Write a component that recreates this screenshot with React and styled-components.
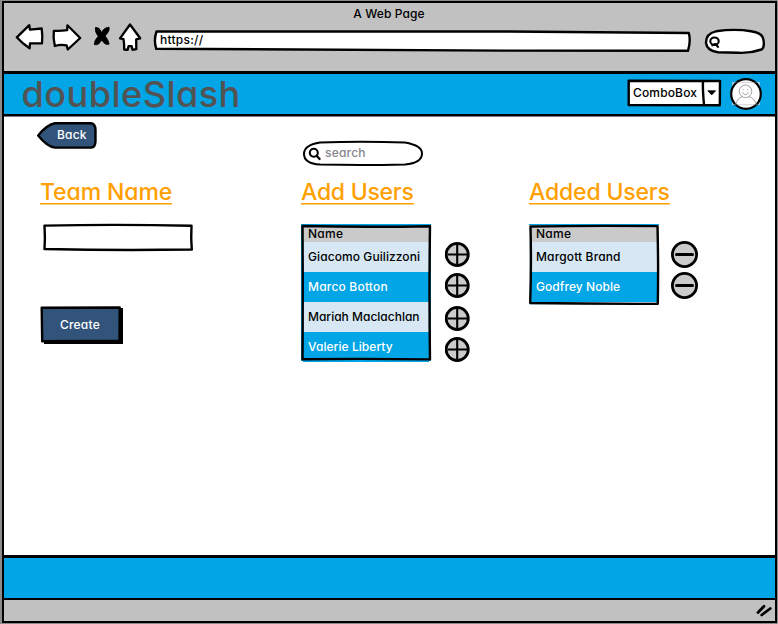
import React from "react";
import styled, { createGlobalStyle } from "styled-components";

const GlobalStyle = createGlobalStyle`
  *, *::before, *::after { box-sizing: border-box; }
  body {
    margin: 0;
    background: #8b8b8b;
    color: #000;
    font: 500 12px/16px Inter, sans-serif;
    font-feature-settings: "cv11";
    letter-spacing: 0.12px;
  }
  button, input {
    font: inherit;
    font-feature-settings: inherit;
    letter-spacing: inherit;
    color: inherit;
    border: 0;
    padding: 0;
    margin: 0;
    background: none;
    outline: 0;
  }
`;

const BrowserWindow = styled.div`
  width: 775px;
  height: 622px;
  margin: 1px 1px 1px 2px;
  border: 2px solid #000;
  display: flex;
  flex-direction: column;
  background: #c1c1c1;
  overflow: hidden;
`;

const Chrome = styled.header`
  height: 68px;
  flex: none;
`;

const PageTitle = styled.div`
  height: 21px;
  padding-top: 3px;
  padding-right: 1px;
  text-align: center;
  letter-spacing: 0.12px;
`;

const Toolbar = styled.div`
  display: flex;
  align-items: flex-start;
  height: 40px;
`;

const NavIcons = styled.svg`
  width: 130px;
  height: 32px;
  margin: -3px 0 0 10px;
  flex: none;
`;

const SketchBox = styled.div`
  position: relative;
  display: flex;
  align-items: center;
  flex: none;
  width: ${(p) => p.$w}px;
  height: ${(p) => p.$h}px;
  margin: ${(p) => p.$m || 0};
`;

const Outline = styled.svg`
  position: absolute;
  inset: 0;
  width: 100%;
  height: 100%;
  overflow: visible;
  fill: ${(p) => p.$fill || "#fff"};
  stroke: #000;
  stroke-width: ${(p) => p.$stroke || 2.4};
  stroke-linejoin: round;
`;

const BoxText = styled.span`
  position: relative;
  padding-left: ${(p) => p.$x}px;
  padding-bottom: ${(p) => p.$lift || 0}px;
  letter-spacing: ${(p) => p.$ls ?? 0.12}px;
  color: ${(p) => p.$color || "#000"};
`;

const Magnifier = styled.svg`
  position: relative;
  width: 14px;
  height: 14px;
  margin-left: ${(p) => p.$x}px;
  fill: none;
  stroke: #000;
  stroke-width: 2.1;
  stroke-linecap: round;
  flex: none;
`;

const SiteHeader = styled.div`
  height: 45px;
  flex: none;
  display: flex;
  align-items: flex-start;
  justify-content: space-between;
  background: #02a5e6;
  border-top: 3px solid #000;
  border-bottom: 2px solid #000;
`;

const Brand = styled.div`
  padding-left: 17.5px;
  font-size: 36px;
  font-weight: 500;
  line-height: 40px;
  letter-spacing: 0.5px;
  color: #535353;
`;

const HeaderTools = styled.div`
  display: flex;
  gap: 9px;
  padding: 4px 13px 0 0;
`;

const Avatar = styled.svg`
  width: 32px;
  height: 32px;
`;

const Page = styled.main`
  flex: 1;
  min-height: 0;
  background: #fff;
  border-top: 1px solid #777;
  padding: 5px 0 0 33px;
`;

const TopRow = styled.div`
  display: flex;
  height: 56px;
`;

const Columns = styled.div`
  display: grid;
  grid-template-columns: 261px 228px 1fr;
  padding-left: 3px;
`;

const Column = styled.section`
  display: flex;
  flex-direction: column;
  align-items: flex-start;
`;

const Heading = styled.h2`
  margin: 0 0 20px;
  height: 26px;
  padding-top: 1px;
  font-size: 23px;
  line-height: 26px;
  font-weight: 500;
  letter-spacing: ${(p) => p.$ls}px;
  color: #ffa000;
  border-bottom: 1px solid #ffa000;
  box-shadow: 0 1px #ffd080;
  white-space: nowrap;
`;

const ButtonText = styled(BoxText)`
  color: #fff;
`;

const ListArea = styled.div`
  display: flex;
  gap: ${(p) => p.$gap}px;
`;

const Table = styled.div`
  position: relative;
  width: 130px;
  height: ${(p) => p.$h}px;
  padding: 1px 2px 2px;
  background: ${(p) => p.$bg};
  border-top: 1px solid #02a5e6;
`;

const TableHead = styled.div`
  height: 16px;
  padding-left: 5px;
  line-height: 16px;
  background: #cbcaca;
  letter-spacing: 0.25px;
`;

const TableRow = styled.div`
  height: 30px;
  padding-left: 5px;
  line-height: 29px;
  white-space: nowrap;
  letter-spacing: ${(p) => p.$ls ?? 0.02}px;
  background: ${(p) => (p.$active ? "#02a5e6" : "#d7e8f4")};
  color: ${(p) => (p.$active ? "#fff" : "#000")};
`;

const Actions = styled.div`
  display: flex;
  flex-direction: column;
  padding-top: ${(p) => p.$top}px;
`;

const RoundButton = styled.button`
  display: block;
  width: ${(p) => p.$size}px;
  height: ${(p) => p.$size}px;
  margin-bottom: ${(p) => p.$gap}px;
  svg {
    display: block;
    width: 100%;
    height: 100%;
  }
`;

const SiteFooter = styled.div`
  height: 45px;
  flex: none;
  background: #02a5e6;
  border-top: 3px solid #000;
  border-bottom: 2px solid #000;
`;

const StatusBar = styled.footer`
  height: 21px;
  flex: none;
  display: flex;
  justify-content: flex-end;
  padding: 3px 3px 0 0;
`;

const Search = ({ x }) => (
  <Magnifier $x={x} viewBox="0 0 14 14">
    <circle cx="5.8" cy="5.7" r="4" />
    <path d="M8.8 9L11.6 12" strokeWidth="2.3" />
  </Magnifier>
);

const AddButton = ({ gap }) => (
  <RoundButton $size={25} $gap={gap} aria-label="Add">
    <svg viewBox="0 0 25 25" stroke="#000">
      <circle cx="12.2" cy="12.5" r="11.1" fill="#cbcbcb" strokeWidth="2.8" />
      <path d="M12.2 2V23M2.5 12.5H22.5" strokeWidth="2.1" />
    </svg>
  </RoundButton>
);

const RemoveButton = ({ gap }) => (
  <RoundButton $size={27} $gap={gap} aria-label="Remove">
    <svg viewBox="0 0 27 27" stroke="#000">
      <circle cx="13.5" cy="13.5" r="12.1" fill="#cbcbcb" strokeWidth="2.8" />
      <path d="M5.5 13.5H21.5" strokeWidth="3" strokeLinecap="round" />
    </svg>
  </RoundButton>
);

const addUsers = [
  { name: "Giacomo Guilizzoni", ls: 0.08, gap: 6 },
  { name: "Marco Botton", ls: 0.2, gap: 8 },
  { name: "Mariah Maclachlan", ls: 0, gap: 6 },
  { name: "Valerie Liberty", ls: 0.06, gap: 0 },
];
const addedUsers = [
  { name: "Margott Brand", ls: 0.14, gap: 4 },
  { name: "Godfrey Noble", ls: 0.06, gap: 0 },
];

function UserTable({ users, height, bg, outline }) {
  return (
    <Table $h={height} $bg={bg}>
      <TableHead>Name</TableHead>
      {users.map((u, i) => (
        <TableRow key={u.name} $active={i % 2 === 1} $ls={u.ls}>
          {u.name}
        </TableRow>
      ))}
      <Outline $fill="none" viewBox={`0 0 130 ${height}`} preserveAspectRatio="none">
        <path d={outline} />
      </Outline>
    </Table>
  );
}

export default function App() {
  return (
    <>
      <GlobalStyle />
      <BrowserWindow>
        <Chrome>
          <PageTitle>A Web Page</PageTitle>
          <Toolbar>
            <NavIcons viewBox="0 0 130 32" fill="#fff" stroke="#000" strokeWidth="2.3" strokeLinejoin="round">
              <path d="M2.8 16.3L15.3 4.2L15.9 8.6L27.7 7.5Q28.7 15 28 22.3L16 22.4L15.6 27.3Q8.5 22.8 2.8 16.3Z" />
              <path d="M39.8 9.8Q46 10.3 53.2 9.2L53.4 4.3L66.2 17L53.8 28.5L52.6 24.3Q46.5 23 40.8 25Q39 17 39.8 9.8Z" />
              <path d="M81.4 6.4Q85.5 6 87.7 11.6Q89.5 6.5 95 6.2Q96.3 9.5 91.2 14.9Q94.2 18.5 95.2 23Q91.7 25 87.6 19Q84.5 25 80.3 23.6Q80 19.5 84.2 15.3Q80.6 11 81.4 6.4Z" fill="#000" strokeWidth="0.8" />
              <path d="M116 3.5L126.2 17.3L122.2 18.4L122.3 28.2L118.5 28.8L117.7 25.2L114.5 25.2L113.7 28.8L110.2 28.5Q110.4 23 109.5 18.2L106 17.3Z" />
            </NavIcons>
            <SketchBox as="label" $w={537} $h={20} $m="6px 0 0 10px">
              <Outline viewBox="0 0 537 20" preserveAspectRatio="none">
                <path d="M2.5 1.5L350 1.5L534.8 3Q537 11 534 20.8L350 20.6Q150 19 2.2 18.8Q-0.5 10 2.5 1.5Z" />
              </Outline>
              <BoxText $x={6} $ls={0.25}>https://</BoxText>
            </SketchBox>
            <SketchBox as="label" $w={60} $h={25} $m="5px 0 0 14px">
              <Outline viewBox="0 0 60 25">
                <path d="M11 2.3Q30 -0.5 46 2.2Q57.5 4 58.3 10Q60 18.5 56.5 20.5Q45 24.5 33 23.8L13 23.2Q2 22 1 14Q0.8 4.5 11 2.3Z" />
                <ellipse cx="9.5" cy="12.2" rx="4.2" ry="3.7" strokeWidth="2.1" />
                <path d="M6.4 16.6L10.5 15L13.6 18.6" fill="none" strokeWidth="2.1" />
              </Outline>
            </SketchBox>
          </Toolbar>
        </Chrome>

        <SiteHeader>
          <Brand>doubleSlash</Brand>
          <HeaderTools>
            <SketchBox as="button" $w={94} $h={27} $m="1px 0 0">
              <Outline viewBox="0 0 94 27">
                <path d="M1.7 1.8L93 2L92.8 26.2L1.7 26ZM76 1.8Q75.5 9 77 26" />
                <path d="M80.8 11.8H88.6L84.7 15.9Z" fill="#000" strokeWidth="0.8" />
              </Outline>
              <BoxText $x={6} $ls={0.15}>ComboBox</BoxText>
            </SketchBox>
            <Avatar viewBox="0 0 32 32" fill="#fff">
              <path d="M2 4H30V27H2Z" fill="#9fc9dc" />
              <circle cx="16" cy="16" r="14.8" stroke="#000" strokeWidth="2.2" />
              <g stroke="#8a8a8a" strokeWidth="0.8" fill="none">
                <path d="M4 4.4H28M3 26.8H29" strokeWidth="0.4" />
                <circle cx="15.5" cy="13.3" r="6.3" />
                <path d="M12 14.3Q15.5 19 19 14.3M13.3 11V12M17.7 11V12M12 18.7Q7.5 20 5.5 26.7M26.5 26.7Q24.5 20 19 18.7" />
              </g>
            </Avatar>
          </HeaderTools>
        </SiteHeader>

        <Page>
          <TopRow>
            <SketchBox as="button" $w={60} $h={27}>
              <Outline $fill="#33547a" viewBox="0 0 60 27">
                <path d="M18 1.2H54Q58.5 2 58.5 8V19Q58.5 25.3 54 25.6H18Q10 24.5 1.2 13.4Q10 2.5 18 1.2Z" />
              </Outline>
              <ButtonText as="div" $x={20} $ls={0.2} $lift={2}>Back</ButtonText>
            </SketchBox>
            <SketchBox as="label" $w={120} $h={25} $m="19px 0 0 206px">
              <Outline $stroke={2} viewBox="0 0 120 25">
                <path d="M17 1.5Q60 0 102 1.6Q119 4.5 119 12.5Q119 22 102 23.5Q60 24.5 17 23.6Q1 22.5 1 13Q1 4 17 1.5Z" />
              </Outline>
              <Search x={5} />
              <BoxText as="div" $x={3} $ls={0.2} $lift={2} $color="#85858c">search</BoxText>
            </SketchBox>
          </TopRow>

          <Columns>
            <Column>
              <Heading $ls={-0.1}>Team Name</Heading>
              <SketchBox as="label" $w={150} $h={27} $m="0 0 0 3px">
                <Outline viewBox="0 0 150 27">
                  <path d="M1.5 1.6Q75 0 148.5 1.8Q147.8 14 148.8 25.5Q75 26.6 1.5 25Q2.3 14 1.5 1.6Z" />
                </Outline>
              </SketchBox>
              <SketchBox as="button" $w={83} $h={38} $m="55px 0 0 0">
                <Outline $fill="#33547a" viewBox="0 0 83 38">
                  <path d="M4 2H83V38H4Z" fill="#000" stroke="none" />
                  <path d="M1.7 1.7L79.7 1.5L79.5 34.6L2.2 35.3Z" />
                </Outline>
                <ButtonText as="div" $x={20} $ls={0.2} $lift={1}>Create</ButtonText>
              </SketchBox>
            </Column>

            <Column>
              <Heading $ls={-0.25}>Add Users</Heading>
              <ListArea $gap={14}>
                <UserTable
                  users={addUsers}
                  height={137}
                  bg="#02a5e6"
                  outline="M1.5 1Q65 2.5 129 1.2Q128 70 129 135.4Q65 134.4 1.5 135.2Q2 70 1.5 1Z"
                />
                <Actions $top={18}>
                  {addUsers.map((u) => (
                    <AddButton key={u.name} gap={u.gap} />
                  ))}
                </Actions>
              </ListArea>
            </Column>

            <Column>
              <Heading $ls={-0.17}>Added Users</Heading>
              <ListArea $gap={12}>
                <UserTable
                  users={addedUsers}
                  height={81}
                  bg="#d7e8f4"
                  outline="M1.5 1.5Q65 0.5 128.5 1.2Q129.5 40 128.8 79.8Q65 80 1.2 79Q2.5 40 1.5 1.5Z"
                />
                <Actions $top={17}>
                  {addedUsers.map((u) => (
                    <RemoveButton key={u.name} gap={u.gap} />
                  ))}
                </Actions>
              </ListArea>
            </Column>
          </Columns>
        </Page>

        <SiteFooter />
        <StatusBar>
          <svg width="16" height="14" viewBox="0 0 16 14" stroke="#000" strokeWidth="2.8" strokeLinecap="round">
            <path d="M2 9.5L8 3.3M5.7 12L14.3 5.5" />
          </svg>
        </StatusBar>
      </BrowserWindow>
    </>
  );
}
